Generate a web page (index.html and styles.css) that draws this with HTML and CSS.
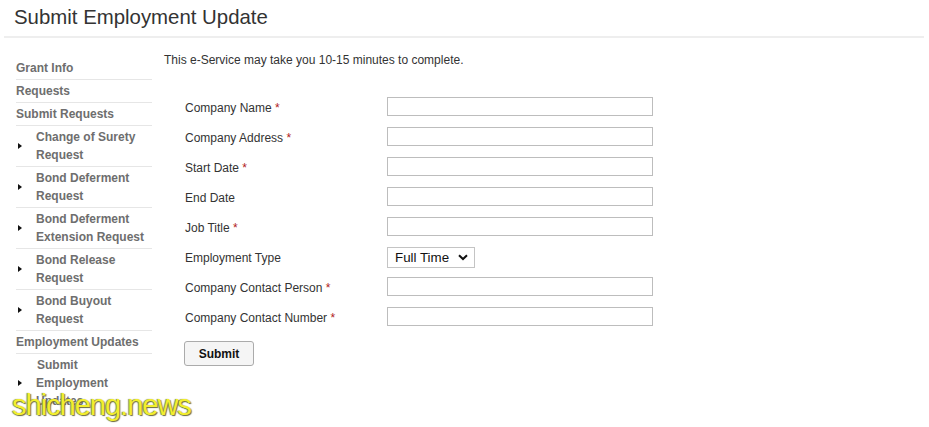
FILE: index.html
```html
<!DOCTYPE html>
<html>
<head>
<meta charset="utf-8">
<title>Submit Employment Update</title>
<link rel="stylesheet" href="styles.css">
</head>
<body>
<div class="page">
  <div class="header"><h1 class="title">Submit Employment Update</h1></div>
  <div class="layout">
    <nav class="sidebar">
      <div class="nav-item">Grant Info</div>
      <div class="nav-item">Requests</div>
      <div class="nav-item">Submit Requests</div>
      <div class="nav-sub"><span class="arrow"></span><span class="sub-text">Change of Surety<br>Request</span></div>
      <div class="nav-sub"><span class="arrow"></span><span class="sub-text">Bond Deferment<br>Request</span></div>
      <div class="nav-sub"><span class="arrow"></span><span class="sub-text">Bond Deferment<br>Extension Request</span></div>
      <div class="nav-sub"><span class="arrow"></span><span class="sub-text">Bond Release<br>Request</span></div>
      <div class="nav-sub"><span class="arrow"></span><span class="sub-text">Bond Buyout<br>Request</span></div>
      <div class="nav-item">Employment Updates</div>
      <div class="nav-sub last"><span class="arrow"></span><span class="sub-text"><span class="indent">Submit</span><br>Employment<br>Updates</span></div>
    </nav>
    <main class="main">
      <p class="intro">This e-Service may take you 10-15 minutes to complete.</p>
      <form class="form">
        <label class="lbl">Company Name <span class="req">*</span></label><div class="fld"><input class="txt" type="text"></div>
        <label class="lbl">Company Address <span class="req">*</span></label><div class="fld"><input class="txt" type="text"></div>
        <label class="lbl">Start Date <span class="req">*</span></label><div class="fld"><input class="txt" type="text"></div>
        <label class="lbl">End Date</label><div class="fld"><input class="txt" type="text"></div>
        <label class="lbl">Job Title <span class="req">*</span></label><div class="fld"><input class="txt" type="text"></div>
        <label class="lbl">Employment Type</label>
        <div class="fld"><div class="sel-wrap"><select class="sel"><option>Full Time</option><option>Part Time</option></select><svg class="chev" width="10" height="7" viewBox="0 0 10 7"><path d="M1 1.2 L5 5 L9 1.2" fill="none" stroke="#111" stroke-width="2"/></svg></div></div>
        <label class="lbl">Company Contact Person <span class="req">*</span></label><div class="fld"><input class="txt" type="text"></div>
        <label class="lbl">Company Contact Number <span class="req">*</span></label><div class="fld"><input class="txt" type="text"></div>
      </form>
      <button class="btn" type="button">Submit</button>
    </main>
  </div>
  <div class="watermark">shicheng.news</div>
</div>
</body>
</html>
```
FILE: styles.css
```css
html, body { margin: 0; padding: 0; background: #fff; }
body { font-family: "Liberation Sans", Arial, sans-serif; color: #333; }
.page { position: relative; width: 929px; height: 427px; overflow: hidden; }
.header { margin: 0 5px 0 4px; border-bottom: 2px solid #eeeeee; height: 36px; }
.title { margin: 0; padding: 5px 0 0 10px; font-size: 20.4px; font-weight: normal; line-height: 24px; color: #333; }
.layout { display: flex; gap: 12px; padding-left: 16px; }
.sidebar { width: 136px; padding-top: 19px; flex: none; }
.nav-item { font-size: 12px; font-weight: bold; color: #6e6e6e; line-height: 14px; padding: 4px 0 4px 0; border-bottom: 1px solid #e6e6e6; }
.nav-sub { display: flex; align-items: center; font-size: 12px; font-weight: bold; color: #6e6e6e; line-height: 18px; padding: 2px 0; border-bottom: 1px solid #e6e6e6; }
.nav-sub.last { border-bottom: none; }
.indent { padding-left: 1px; }
.arrow { width: 0; height: 0; border-top: 3.5px solid transparent; border-bottom: 3.5px solid transparent; border-left: 4px solid #111; margin: 0 14px 0 2px; flex: none; }
.main { flex: 1; padding-top: 15px; }
.intro { margin: 0; font-size: 12px; line-height: 14px; color: #333; }
.form { display: grid; grid-template-columns: 202px 266px; grid-auto-rows: 30px; margin: 24px 0 0 21px; align-items: center; }
.lbl { font-size: 12px; color: #333; line-height: 14px; padding-top: 4px; }
.req { color: #b02020; }
.fld { display: flex; align-items: center; }
.txt { box-sizing: border-box; width: 266px; height: 19px; border: 1px solid #bdbdbd; margin: 0; padding: 1px 3px; font-size: 12px; font-family: inherit; background: #fff; }
.sel-wrap { position: relative; width: 88px; height: 21px; margin-top: 3px; }
.sel { -webkit-appearance: none; appearance: none; box-sizing: border-box; width: 88px; height: 21px; border: 1px solid #c4c4c4; border-radius: 0; background: #fff; font-family: "Liberation Sans", Arial, sans-serif; font-size: 13.333px; color: #111; padding: 0 0 0 7px; margin: 0; }
.chev { position: absolute; left: 71px; top: 7px; pointer-events: none; }
.btn { margin: 10px 0 0 20px; box-sizing: border-box; width: 70px; height: 25px; border: 1px solid #ababab; border-radius: 3px; background: #f5f5f5; font-family: "Liberation Sans", Arial, sans-serif; font-size: 12px; font-weight: bold; color: #111; padding: 0; }
.watermark { position: absolute; left: 12px; top: 388px; font-family: "Liberation Sans", Arial, sans-serif; font-size: 29px; letter-spacing: -1px; color: #f2ee2e; text-shadow: 1px 1px 1px #6a6a3a, -1px 0 1px #8a8a50; line-height: 34px; }
```
